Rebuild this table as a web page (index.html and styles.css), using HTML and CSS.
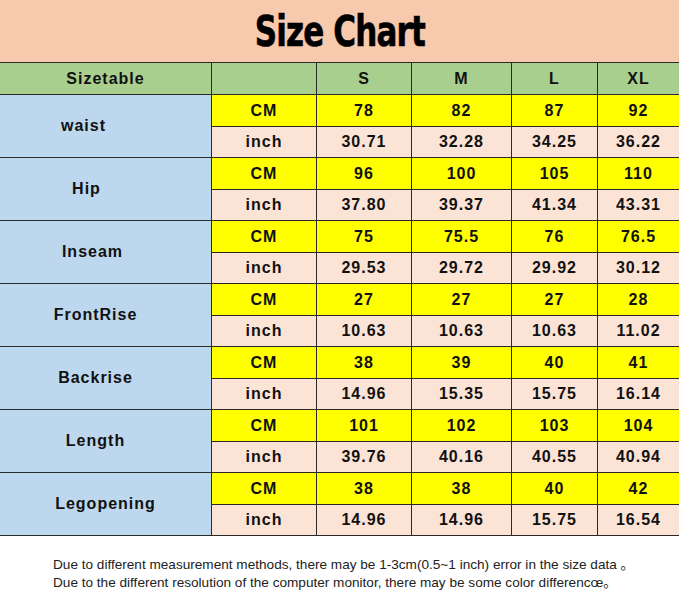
FILE: index.html
```html
<!DOCTYPE html>
<html>
<head>
<meta charset="utf-8">
<link rel="stylesheet" href="styles.css">
</head>
<body>
<div class="title"><span class="title-text">Size Chart</span></div>
<div class="chart">
  <div class="c head">Sizetable</div>
  <div class="c head"></div>
  <div class="c head">S</div>
  <div class="c head">M</div>
  <div class="c head">L</div>
  <div class="c head">XL</div>

  <div class="c label waist">waist</div>
  <div class="c cm">CM</div><div class="c cm">78</div><div class="c cm">82</div><div class="c cm">87</div><div class="c cm">92</div>
  <div class="c in">inch</div><div class="c in">30.71</div><div class="c in">32.28</div><div class="c in">34.25</div><div class="c in">36.22</div>

  <div class="c label hip">Hip</div>
  <div class="c cm">CM</div><div class="c cm">96</div><div class="c cm">100</div><div class="c cm">105</div><div class="c cm">110</div>
  <div class="c in">inch</div><div class="c in">37.80</div><div class="c in">39.37</div><div class="c in">41.34</div><div class="c in">43.31</div>

  <div class="c label inseam">Inseam</div>
  <div class="c cm">CM</div><div class="c cm">75</div><div class="c cm">75.5</div><div class="c cm">76</div><div class="c cm">76.5</div>
  <div class="c in">inch</div><div class="c in">29.53</div><div class="c in">29.72</div><div class="c in">29.92</div><div class="c in">30.12</div>

  <div class="c label">FrontRise</div>
  <div class="c cm">CM</div><div class="c cm">27</div><div class="c cm">27</div><div class="c cm">27</div><div class="c cm">28</div>
  <div class="c in">inch</div><div class="c in">10.63</div><div class="c in">10.63</div><div class="c in">10.63</div><div class="c in">11.02</div>

  <div class="c label">Backrise</div>
  <div class="c cm">CM</div><div class="c cm">38</div><div class="c cm">39</div><div class="c cm">40</div><div class="c cm">41</div>
  <div class="c in">inch</div><div class="c in">14.96</div><div class="c in">15.35</div><div class="c in">15.75</div><div class="c in">16.14</div>

  <div class="c label">Length</div>
  <div class="c cm">CM</div><div class="c cm">101</div><div class="c cm">102</div><div class="c cm">103</div><div class="c cm">104</div>
  <div class="c in">inch</div><div class="c in">39.76</div><div class="c in">40.16</div><div class="c in">40.55</div><div class="c in">40.94</div>

  <div class="c label wide">Legopening</div>
  <div class="c cm">CM</div><div class="c cm">38</div><div class="c cm">38</div><div class="c cm">40</div><div class="c cm">42</div>
  <div class="c in">inch</div><div class="c in">14.96</div><div class="c in">14.96</div><div class="c in">15.75</div><div class="c in">16.54</div>
</div>
<div class="notes">
  <p>Due to different measurement methods, there may be 1-3cm(0.5~1 inch) error in the size data 。</p>
  <p>Due to the different resolution of the computer monitor, there may be some color differencœ。</p>
</div>
</body>
</html>
```
FILE: styles.css
```css
html, body {
  margin: 0;
  padding: 0;
  background: #ffffff;
}
body {
  width: 679px;
  font-family: "Liberation Sans", Arial, "Noto Sans CJK SC", sans-serif;
  color: #111;
}
.title {
  height: 62px;
  background: #f8caad;
  display: flex;
  align-items: center;
  justify-content: center;
}
.title-text {
  font-family: "DejaVu Sans Condensed", "DejaVu Sans", sans-serif;
  font-stretch: condensed;
  font-weight: 900;
  font-size: 42px;
  letter-spacing: -1px;
  color: #000;
  display: inline-block;
  transform: scaleX(0.82);
  -webkit-text-stroke: 0.6px #000;
}
.chart {
  display: grid;
  grid-template-columns: 211px 104px 94px 99px 85px 81px;
  grid-template-rows: 31px repeat(7, 31px 30px);
  gap: 1px;
  background: #2a2a2a;
  border-top: 1px solid #2a2a2a;
  border-bottom: 1px solid #2a2a2a;
}
.c {
  display: flex;
  align-items: center;
  justify-content: center;
  font-weight: bold;
  font-size: 16px;
  letter-spacing: 1px;
}
.head {
  background: #a9cf8e;
}
.label {
  grid-row: span 2;
  grid-column: 1;
  background: #bdd7ee;
  padding-right: 20px;
}
.label.waist {
  padding-right: 44px;
}
.label.hip {
  padding-right: 38px;
}
.label.inseam {
  padding-right: 26px;
}
.label.wide {
  padding-right: 0;
}
.cm {
  background: #ffff00;
}
.in {
  background: #fbe3d6;
}
.notes {
  padding: 20px 0 0 53px;
  font-size: 13.6px;
  color: #222;
}
.notes p {
  margin: 0;
  line-height: 18px;
}
```
